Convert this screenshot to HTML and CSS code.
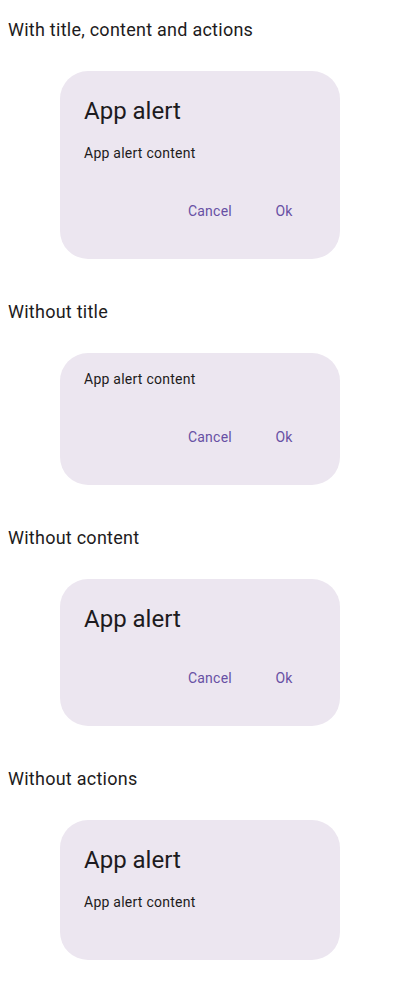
FILE: index.html
```html
<!DOCTYPE html>
<html>
<head>
<meta charset="utf-8">
<link rel="stylesheet" href="styles.css">
</head>
<body>
<main class="page">
  <section class="demo">
    <h2 class="demo-label">With title, content and actions</h2>
    <div class="dialog">
      <div class="dialog-title">App alert</div>
      <div class="dialog-text">App alert content</div>
      <div class="dialog-actions">
        <button class="text-btn">Cancel</button>
        <button class="text-btn">Ok</button>
      </div>
    </div>
  </section>
  <section class="demo">
    <h2 class="demo-label">Without title</h2>
    <div class="dialog dialog--no-title">
      <div class="dialog-text">App alert content</div>
      <div class="dialog-actions">
        <button class="text-btn">Cancel</button>
        <button class="text-btn">Ok</button>
      </div>
    </div>
  </section>
  <section class="demo">
    <h2 class="demo-label">Without content</h2>
    <div class="dialog dialog--no-text">
      <div class="dialog-title">App alert</div>
      <div class="dialog-actions">
        <button class="text-btn">Cancel</button>
        <button class="text-btn">Ok</button>
      </div>
    </div>
  </section>
  <section class="demo">
    <h2 class="demo-label">Without actions</h2>
    <div class="dialog dialog--no-actions">
      <div class="dialog-title">App alert</div>
      <div class="dialog-text">App alert content</div>
    </div>
  </section>
</main>
</body>
</html>
```

FILE: styles.css
```css
html, body {
  margin: 0;
  padding: 0;
  background: #ffffff;
}

body {
  font-family: Roboto, "Noto Sans", sans-serif;
  color: #1d1b20;
}

.page {
  display: flex;
  flex-direction: column;
  padding: 18px 8px 0 8px;
}

.demo {
  display: flex;
  flex-direction: column;
  margin-bottom: 41px;
}

.demo-label {
  margin: 0 0 29px 0;
  font-size: 18px;
  line-height: 24px;
  font-weight: 400;
  letter-spacing: 0.25px;
  color: #1d1b20;
}

.dialog {
  align-self: center;
  width: 280px;
  box-sizing: border-box;
  background: #ece6f0;
  border-radius: 28px;
  padding: 24px;
  display: flex;
  flex-direction: column;
}

.dialog-title {
  font-size: 24px;
  line-height: 32px;
  font-weight: 400;
  color: #1d1b20;
  margin-bottom: 16px;
}

.dialog-text {
  font-size: 14px;
  line-height: 20px;
  letter-spacing: 0.25px;
  color: #1d1b20;
  margin-bottom: 24px;
}

.dialog--no-title {
  padding-top: 16px;
}

.dialog--no-text .dialog-title {
  margin-bottom: 19px;
}

.dialog--no-actions {
  padding-bottom: 24px;
}

.dialog-actions {
  display: flex;
  justify-content: flex-end;
  gap: 8px;
  height: 48px;
  align-items: center;
}

.text-btn {
  min-width: 64px;
  height: 40px;
  padding: 0 12px;
  border: none;
  background: transparent;
  font-family: Roboto, "Noto Sans", sans-serif;
  font-size: 14px;
  line-height: 20px;
  font-weight: 400;
  letter-spacing: 0.25px;
  color: #6750a4;
  border-radius: 20px;
  cursor: pointer;
}
```
